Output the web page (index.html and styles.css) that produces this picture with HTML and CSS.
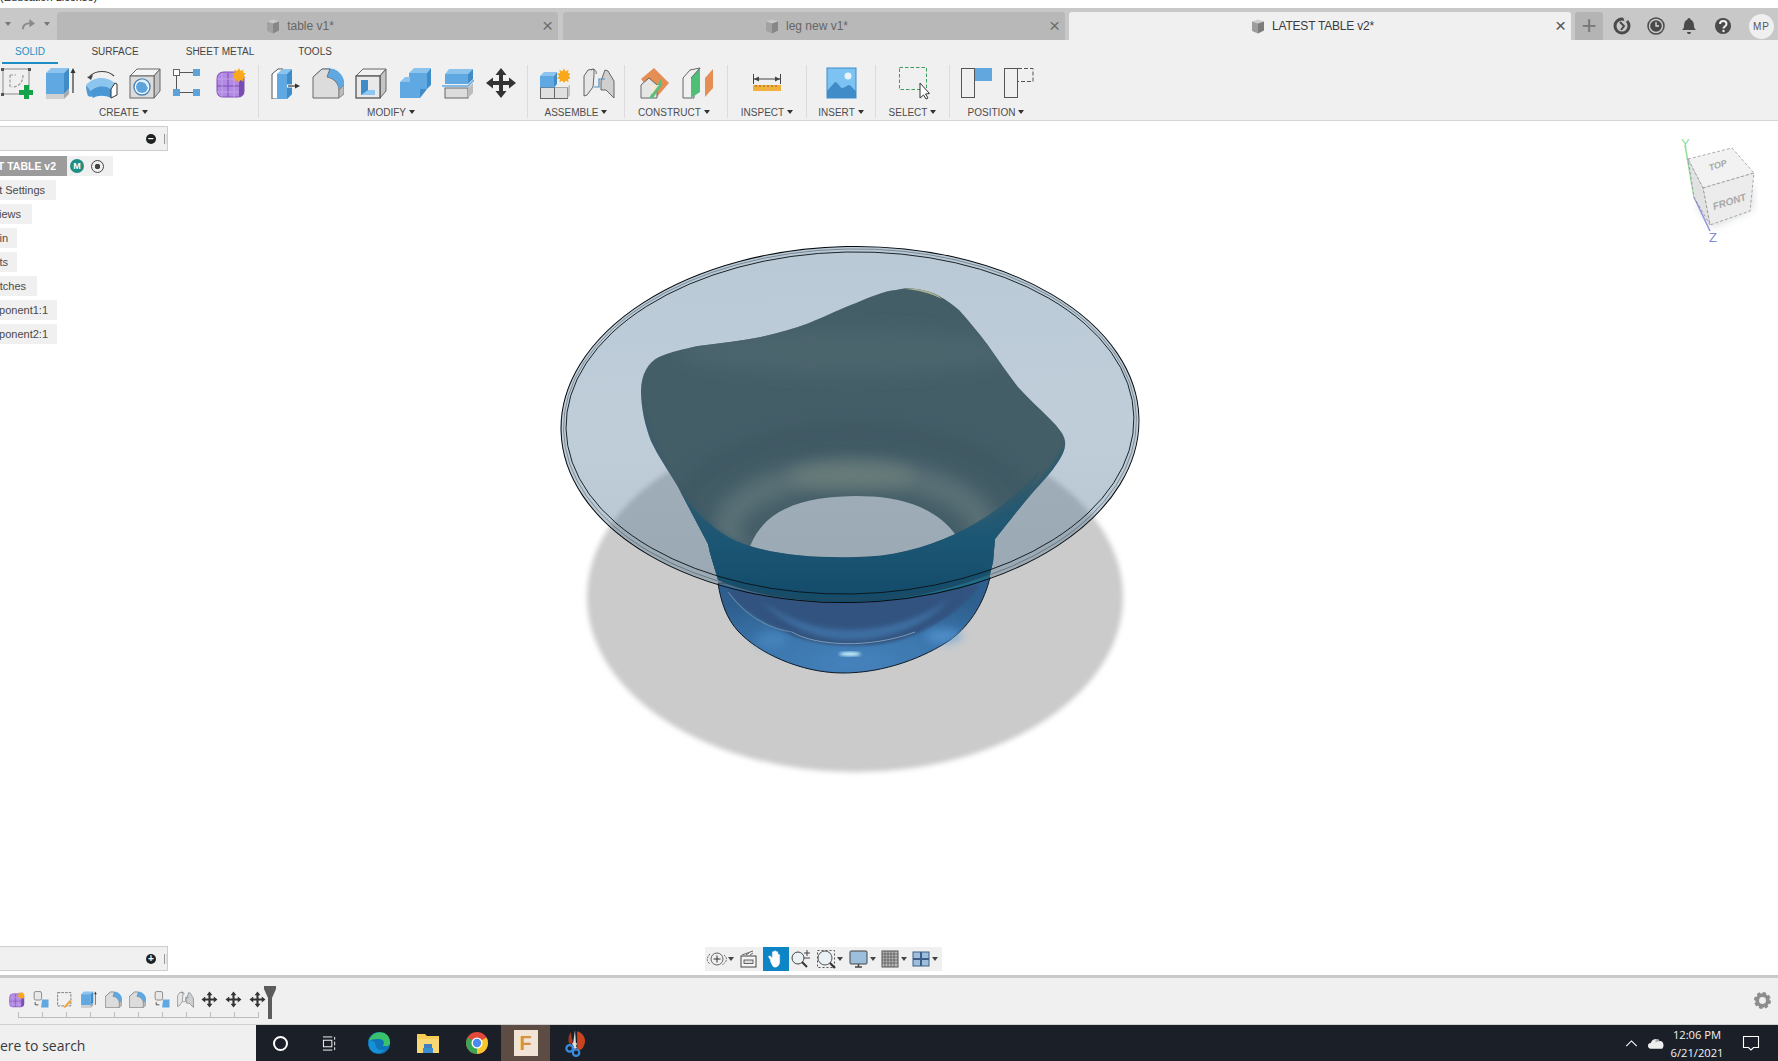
FILE: index.html
```html
<!DOCTYPE html>
<html lang="en">
<head>
<meta charset="utf-8">
<title>LATEST TABLE v2</title>
<link rel="stylesheet" href="styles.css">
</head>
<body>
<svg class="defs" aria-hidden="true">
  <defs>
    <linearGradient id="blueFace" x1="0" y1="0" x2="1" y2="1"><stop offset="0" stop-color="#6ab0e6"/><stop offset="1" stop-color="#4f9bd8"/></linearGradient>
    <radialGradient id="baseGrad" cx="0.5" cy="0.9" r="0.75"><stop offset="0" stop-color="#4582bc"/><stop offset="0.55" stop-color="#3a74aa"/><stop offset="1" stop-color="#2e5f8e"/></radialGradient>
    <linearGradient id="bandGrad" x1="0" y1="0" x2="0" y2="1"><stop offset="0" stop-color="#2e5a6e" stop-opacity=".25"/><stop offset="0.55" stop-color="#1b5674"/><stop offset="1" stop-color="#124a68"/></linearGradient>
    <linearGradient id="diskGrad" x1="0" y1="0" x2="0" y2="1"><stop offset="0" stop-color="#5f84a0" stop-opacity=".44"/><stop offset=".5" stop-color="#5f84a0" stop-opacity=".4"/><stop offset="1" stop-color="#5f8096" stop-opacity=".46"/></linearGradient>
    <filter id="blur3"><feGaussianBlur stdDeviation="2.5"/></filter>
    <filter id="blur6" x="-30%" y="-60%" width="160%" height="220%"><feGaussianBlur stdDeviation="8"/></filter>
    <filter id="blur2"><feGaussianBlur stdDeviation="1.6"/></filter>
    <filter id="blur5" x="-60%" y="-100%" width="220%" height="300%"><feGaussianBlur stdDeviation="5"/></filter>

    <symbol id="i-sketch" viewBox="0 0 32 32">
      <rect x="2" y="2" width="26" height="25" fill="none" stroke="#8a8a8a" stroke-width="1"/>
      <path d="M9 8v12h2M9 8h6M22 8c0 7-4 12-11 12" fill="none" stroke="#9a9a9a" stroke-width="1.2" stroke-dasharray="3 1.5"/>
      <rect x="0" y="1" width="3" height="3" fill="#555"/><rect x="27" y="1" width="3" height="3" fill="#555"/><rect x="0" y="26" width="3" height="3" fill="#555"/>
      <path d="M23 18h5v5h5v5h-5v4h-5v-4h-5v-5h5z" fill="#15a24c"/>
    </symbol>
    <symbol id="i-extrude" viewBox="0 0 32 32">
      <path d="M2 6l5-5h18l-5 5z" fill="#8cc4ee"/><rect x="2" y="6" width="18" height="21" fill="#5fa8e2"/>
      <path d="M20 6l5-5v21l-5 5z" fill="#3f8cc8"/>
      <rect x="2" y="27" width="18" height="5" fill="#cfcfcf"/><path d="M20 27l5-5v5l-5 5z" fill="#a8a8a8"/>
      <path d="M29 26V4" stroke="#333" stroke-width="1.2"/><path d="M26.5 6L29 1l2.5 5z" fill="#333"/>
    </symbol>
    <symbol id="i-revolve" viewBox="0 0 32 32">
      <path d="M4 9C10 3 22 3 28 9" fill="none" stroke="#444" stroke-width="1.2"/><path d="M1 10l6-2-2 5z" fill="#444"/>
      <path d="M0 18C8 9 20 9 29 16l-4 6C18 18 10 19 5 24z" fill="#8cc6ee"/>
      <path d="M0 18c0 5 1 8 2 11l3 1c2-2 3-5 3-6 6-4 13-4 17-2v-0C18 18 10 19 5 24z" fill="#4f9bd8"/>
      <path d="M5 24c5-5 13-6 20-2v9c-6-3-13-3-18 0-2-2-2-5-2-7z" fill="#4a97d6"/>
      <path d="M25 22l4-6 2 1v11l-6 3z" fill="#fff" stroke="#333" stroke-width="1"/>
    </symbol>
    <symbol id="i-hole" viewBox="0 0 32 32">
      <path d="M1 9l7-7h23l-6 7z" fill="#f4f4f4" stroke="#666"/><path d="M25 9l6-7v22l-6 7z" fill="#c4c4c4" stroke="#666"/>
      <rect x="1" y="9" width="24" height="22" fill="#dcdcdc" stroke="#666"/>
      <circle cx="13" cy="20" r="8" fill="#fff" stroke="#4a86b8" stroke-width="1.4"/>
      <circle cx="13" cy="20" r="6" fill="#5ea4dc"/><path d="M11 14a6 6 0 0 1 8 6 7 7 0 0 0-8-6z" fill="#dff0fb" stroke="#dff0fb" stroke-width="2"/>
    </symbol>
    <symbol id="i-pattern" viewBox="0 0 32 32">
      <g transform="translate(-3 0)">
        <rect x="5.500" y="2.500" width="6" height="6" fill="#fff" stroke="#666"/>
        <path d="M12 5.500h13M8.500 9v13M12 25.500h13" stroke="#555" stroke-width="1"/>
        <rect x="25" y="2" width="7" height="7" fill="#5ba3d9"/><rect x="5" y="22" width="7" height="7" fill="#5ba3d9"/><rect x="25" y="22" width="7" height="7" fill="#5ba3d9"/>
      </g>
    </symbol>
    <symbol id="i-form" viewBox="0 0 32 32">
      <path d="M3 12q0-7 7-7h14q6 0 6 7v12q0 6-6 6H9q-6 0-6-6z" fill="#b28ae4" stroke="#7f4fb8"/>
      <path d="M25 12q5 0 5 4v9q0 3-5 5z" fill="#7a4cb2"/>
      <path d="M3 19h22M14 6v24" stroke="#7a4cb2" stroke-width="1" fill="none"/>
      <path d="M3 12h22M3 25h22M8 6v24M20 6v24" stroke="#c6a8ec" stroke-width=".8" fill="none"/>
      <path d="M23 0l2 4 4-2-1 4 4 1-3 3 3 3-4 1 1 4-4-2-2 3-2-3-4 2 1-4-4-1 3-3-3-3 4-1-1-4 4 2z" fill="#f8a81a" transform="translate(7.500 .9) scale(.76)"/>
    </symbol>
    <symbol id="i-press" viewBox="0 0 32 32">
      <path d="M3 32V7l6-5h5L9 7v25z" fill="#fff" stroke="#555"/>
      <path d="M8 7l6-5h9v25l-5 5H8z" fill="#5fa8e2"/><path d="M18 7l5-5v25l-5 5z" fill="#3f8cc8"/><path d="M8 7l6-5h9l-5 5z" fill="#8cc4ee"/>
      <path d="M18 19h8" stroke="#fff" stroke-width="3"/><path d="M19 19h8" stroke="#333" stroke-width="1.2"/><path d="M26 16.500l5 2.500-5 2.500z" fill="#333"/>
    </symbol>
    <symbol id="i-fillet" viewBox="0 0 32 32">
      <path d="M1 10L10 2h9c8 1 13 8 13 16l-5 5c0-7-6-13-12-13z" fill="#5fa8e2" stroke="#5fa8e2"/>
      <path d="M1 31V10L10 2h8l-3 8c7 1 12 7 12 13v8z" fill="#dcdcdc" stroke="#666"/>
      <path d="M15 10c7 0 12 6 12 13l5-5C32 10 26 3 19 2z" fill="#5fa8e2"/>
      <path d="M27 23l5-5v9l-5 4z" fill="#bcbcbc" stroke="#888"/>
    </symbol>
    <symbol id="i-shell" viewBox="0 0 32 32">
      <path d="M1 9l7-7h23l-6 7z" fill="#f1f1f1" stroke="#666"/><path d="M25 9l6-7v22l-6 7z" fill="#c4c4c4" stroke="#666"/>
      <rect x="1" y="9" width="24" height="22" fill="#e9e9e9" stroke="#555" stroke-width="1.3"/>
      <path d="M6 13h7v10h7v5H6z" fill="#3f8cc8"/><path d="M13 23h7v5H6z" fill="#8cc8f2"/>
    </symbol>
    <symbol id="i-combine" viewBox="0 0 32 32">
      <path d="M10 6l5-5h17l-4 5z" fill="#8cc4ee"/><rect x="10" y="6" width="18" height="16" fill="#5fa8e2"/><path d="M28 6l4-5v17l-4 4z" fill="#3f8cc8"/>
      <path d="M1 15l5-5h5v5z" fill="#8cc4ee"/><rect x="1" y="15" width="20" height="16" fill="#5fa8e2"/><path d="M21 22h7l-3 4-4 5z" fill="#3f8cc8"/>
    </symbol>
    <symbol id="i-split" viewBox="0 0 32 32">
      <path d="M3 7l4-5h24l-5 5z" fill="#8cc4ee"/><rect x="3" y="7" width="23" height="10" fill="#5fa8e2"/><path d="M26 7l5-5v10l-5 5z" fill="#3f8cc8"/>
      <rect x="3" y="21" width="23" height="10" fill="#dcdcdc" stroke="#666"/><path d="M26 21l5-5v10l-5 5z" fill="#bcbcbc"/>
      <path d="M0 19h26l6-6" fill="none" stroke="#5fa8e2" stroke-width="1.5"/>
    </symbol>
    <symbol id="i-move" viewBox="0 0 32 32">
      <path d="M16 1l5.500 7H18v6h6v-3.500l7 5.500-7 5.500V18h-6v6h3.500L16 31l-5.500-7H14v-6H8v3.500L1 16l7-5.500V14h6V8h-3.500z" fill="#333"/>
    </symbol>
    <symbol id="i-comp" viewBox="0 0 32 32">
      <rect x="2.500" y="20.500" width="14" height="11" fill="#e0e0e0" stroke="#666"/><rect x="16.500" y="20.500" width="13" height="11" fill="#e0e0e0" stroke="#666"/>
      <path d="M16.500 20.500l4-4h12l-3 4z" fill="#eee"/><path d="M29.500 20.500l3-4v11l-3 4z" fill="#c4c4c4"/>
      <rect x="2" y="9" width="14" height="11.500" fill="#5fa8e2"/><path d="M2 9l4-4h13l-3 4z" fill="#8cc4ee"/><path d="M16 9l3-4v12l-3 3.500z" fill="#3f8cc8"/>
      <path d="M23 0l2 4 4-2-1 4 4 1-3 3 3 3-4 1 1 4-4-2-2 3-2-3-4 2 1-4-4-1 3-3-3-3 4-1-1-4 4 2z" fill="#f8a81a" transform="translate(8 1.300) scale(.78)"/>
    </symbol>
    <symbol id="i-joint" viewBox="0 0 32 32">
      <path d="M1 9l4-6 6-1v6l-1 12-6 8-3 1z" fill="#e6e6e6" stroke="#666"/>
      <path d="M8 3c4-2 6 2 5 4" fill="none" stroke="#666"/>
      <path d="M18 14l4-11 3 1 6 10v17l-8-8-5 0z" fill="#cfcfcf" stroke="#666"/>
      <path d="M11 20h5v-8h6" fill="none" stroke="#4f8cc0" stroke-width="1.2"/>
    </symbol>
    <symbol id="i-offset" viewBox="0 0 32 32">
      <path d="M16 1l15 15-13 15L3 12z" fill="#e48e55"/>
      <path d="M3 18l8-7 8 7v13H3z" fill="#e6e6e6" stroke="#666"/>
      <path d="M11 31l12-19 1 6-9 13z" fill="#5bbf7a"/><path d="M12 18h9l-7 9z" fill="#f3e8d6" opacity=".9"/>
    </symbol>
    <symbol id="i-plane" viewBox="0 0 32 32">
      <path d="M1 11l7-8 10-2-6 10v20H1z" fill="#f0f0f0" stroke="#666"/>
      <path d="M9 11l9-10v24l-9 6z" fill="#4fbf78"/><path d="M9 11l9-10" stroke="#666"/>
      <path d="M23 11l8-9v19l-8 9z" fill="#e48e55"/>
    </symbol>
    <symbol id="i-gear" viewBox="0 0 16 16">
      <circle cx="8" cy="8" r="5" fill="none" stroke="#8d8d8d" stroke-width="3.500"/><circle cx="8" cy="8" r="6.500" fill="none" stroke="#8d8d8d" stroke-width="3" stroke-dasharray="3 2.100"/>
    </symbol>
    <symbol id="i-cube" viewBox="0 0 16 16">
      <path d="M2 3l6-2 6 2-6 2z" fill="#cfcfcf"/><path d="M2 3l6 2v10l-5-2-1-1z" fill="#9d9d9d"/><path d="M8 5l6-2v9l-6 3z" fill="#7c7c7c"/>
    </symbol>
    <symbol id="i-mini-move" viewBox="0 0 32 32">
      <rect x="4" y="1" width="14" height="16" rx="3" fill="#e8e8e8" stroke="#777" stroke-width="1.500"/>
      <path d="M6 21v5h6" fill="none" stroke="#333" stroke-width="1.500"/>
      <path d="M19 16h12v15H17z" fill="#5fa8e2"/>
    </symbol>
    <symbol id="i-mini-sketch" viewBox="0 0 32 32">
      <rect x="3" y="3" width="25" height="25" fill="none" stroke="#666" stroke-width="1.500" stroke-dasharray="5 2"/>
      <path d="M14 30l12-13 3 3-12 12z" fill="#f2a43a"/>
    </symbol>
  </defs>
</svg>

<div class="license"><span>(Education License)</span></div>

<header class="tabbar">
  <div class="qat">
    <span class="qat-caret"></span>
    <svg class="qat-redo" viewBox="0 0 16 14"><path d="M2 12c0-5 4-7 9-6" fill="none" stroke="#8a8a8a" stroke-width="2"/><path d="M9 1l6 5-6 4z" fill="#8a8a8a"/></svg>
    <span class="qat-caret"></span>
  </div>
  <div class="tab">
    <div class="tab-main"><svg class="tab-cube"><use href="#i-cube"/></svg><span>table v1*</span></div><span class="tab-x">×</span>
  </div>
  <div class="tab tab-mid">
    <div class="tab-main"><svg class="tab-cube"><use href="#i-cube"/></svg><span>leg new v1*</span></div><span class="tab-x">×</span>
  </div>
  <div class="tab tab-active">
    <div class="tab-main"><svg class="tab-cube"><use href="#i-cube"/></svg><span>LATEST TABLE v2*</span></div><span class="tab-x">×</span>
  </div>
  <div class="tab-plus">+</div>
  <div class="top-icons">
    <svg class="top-i" viewBox="0 0 18 18"><circle cx="9" cy="9" r="7" fill="none" stroke="#4a4a4a" stroke-width="3"/><path d="M7 5l4 4-3 4" fill="none" stroke="#4a4a4a" stroke-width="2"/><path d="M10 0l6 2-4 4z" fill="#c6c6c6"/></svg>
    <svg class="top-i" viewBox="0 0 18 18"><circle cx="9" cy="9" r="8" fill="none" stroke="#4a4a4a" stroke-width="1.500"/><circle cx="9" cy="9" r="5.800" fill="#4a4a4a"/><path d="M9 5v4h3" fill="none" stroke="#ddd" stroke-width="1.300"/></svg>
    <svg class="top-i" viewBox="0 0 18 18"><path d="M9 1c1 0 1.500 1 1.500 1.500C13 3.500 14 6 14 9c0 2 1 3 2 4H2c1-1 2-2 2-4 0-3 1-5.500 3.500-6.500C7.500 2 8 1 9 1zM7 15h4c0 1.500-1 2-2 2s-2-.5-2-2z" fill="#4a4a4a"/></svg>
    <svg class="top-i" viewBox="0 0 18 18"><circle cx="9" cy="9" r="8" fill="#4a4a4a"/><path d="M6 7c0-4 6.500-4 6.500 0 0 2.500-3 2.500-3 4.500" fill="none" stroke="#eee" stroke-width="2"/><circle cx="9.500" cy="14" r="1.200" fill="#eee"/></svg>
    <div class="avatar">MP</div>
  </div>
</header>

<section class="ribbon">
  <nav class="ribbon-tabs">
    <span class="rt rt-solid">SOLID</span>
    <span class="rt rt-surface">SURFACE</span>
    <span class="rt rt-sheet">SHEET METAL</span>
    <span class="rt rt-tools">TOOLS</span>
  </nav>
  <div class="groups">
    <div class="group g-create">
      <div class="icons">
        <svg class="ic"><use href="#i-sketch"/></svg><svg class="ic"><use href="#i-extrude"/></svg><svg class="ic"><use href="#i-revolve"/></svg><svg class="ic"><use href="#i-hole"/></svg><svg class="ic"><use href="#i-pattern"/></svg><svg class="ic"><use href="#i-form"/></svg>
      </div>
      <div class="glabel">CREATE<i></i></div>
    </div>
    <div class="sep"></div>
    <div class="group g-modify">
      <div class="icons">
        <svg class="ic"><use href="#i-press"/></svg><svg class="ic"><use href="#i-fillet"/></svg><svg class="ic"><use href="#i-shell"/></svg><svg class="ic"><use href="#i-combine"/></svg><svg class="ic"><use href="#i-split"/></svg><svg class="ic"><use href="#i-move"/></svg>
      </div>
      <div class="glabel">MODIFY<i></i></div>
    </div>
    <div class="sep"></div>
    <div class="group g-assemble">
      <div class="icons"><svg class="ic"><use href="#i-comp"/></svg><svg class="ic"><use href="#i-joint"/></svg></div>
      <div class="glabel">ASSEMBLE<i></i></div>
    </div>
    <div class="sep"></div>
    <div class="group g-construct">
      <div class="icons"><svg class="ic"><use href="#i-offset"/></svg><svg class="ic"><use href="#i-plane"/></svg></div>
      <div class="glabel">CONSTRUCT<i></i></div>
    </div>
    <div class="sep"></div>
    <div class="group g-inspect">
      <div class="icons">
        <svg class="ic" viewBox="0 0 32 32"><path d="M3 12h26" stroke="#444" stroke-width="1"/><path d="M2.500 7v10M29.500 7v10" stroke="#444" stroke-width="1"/><path d="M3 12l5-2.500v5zM29 12l-5-2.500v5z" fill="#444"/><rect x="2" y="18" width="28" height="6" fill="#f2b13c"/><path d="M5 18v2M9 18v2M13 18v2M17 18v2M21 18v2M25 18v2" stroke="#8a6420" stroke-width="1"/></svg>
      </div>
      <div class="glabel">INSPECT<i></i></div>
    </div>
    <div class="sep"></div>
    <div class="group g-insert">
      <div class="icons">
        <svg class="ic" viewBox="0 0 32 32"><rect x="2" y="1" width="29" height="30" fill="#7cc2f2"/><rect x="2" y="1" width="29" height="30" fill="none" stroke="#3f8cc8" stroke-width="1"/><circle cx="23" cy="9" r="3.500" fill="#e8f3fb"/><path d="M2 24l8-9c3 0 5 6 7 6 3 0 5-3 7-3s4 4 7 6v7H2z" fill="#3f8cc8"/></svg>
      </div>
      <div class="glabel">INSERT<i></i></div>
    </div>
    <div class="sep"></div>
    <div class="group g-select">
      <div class="icons">
        <svg class="ic" viewBox="0 0 32 32"><rect x="2.500" y="0.500" width="27" height="22" fill="none" stroke="#3f9a62" stroke-width="1" stroke-dasharray="3.500 2"/><path d="M23 16v15l3.500-3 2.500 4 2-1-2.500-4 4-.5z" fill="#fff" stroke="#333" stroke-width="1"/></svg>
      </div>
      <div class="glabel">SELECT<i></i></div>
    </div>
    <div class="sep"></div>
    <div class="group g-position">
      <div class="icons">
        <svg class="ic" viewBox="0 0 32 32"><rect x="1.500" y="1.500" width="13" height="29" fill="none" stroke="#555"/><rect x="15" y="1" width="17" height="13" fill="#62a8df"/></svg>
        <svg class="ic" viewBox="0 0 32 32"><rect x="0.500" y="1.500" width="13" height="29" fill="none" stroke="#555"/><path d="M14 1.500h15v13H14" fill="none" stroke="#555" stroke-dasharray="4 2"/></svg>
      </div>
      <div class="glabel">POSITION<i></i></div>
    </div>
  </div>
</section>

<main class="canvas">
  <svg class="scene" viewBox="540 230 640 560">
    <ellipse cx="855" cy="597" rx="268" ry="175" fill="#cbcbcb" filter="url(#blur3)"/>

    <path d="M718 583C721 603 727 619 738 631C757 652 800 673 843 673C885 673 925 657 950 640C971 625 985 600 990 577Z" fill="url(#baseGrad)" stroke="#0e1a26" stroke-width="1"/>
    <path d="M726 590C745 612 775 634 815 642C838 647 872 647 895 641C930 632 962 610 980 585Z" fill="#30527f" filter="url(#blur2)"/>
    <path d="M760 600C790 622 820 630 850 630C885 630 925 618 950 598C925 628 885 640 850 640C815 640 785 625 760 600Z" fill="#3e6ea2" filter="url(#blur3)"/>
    <path d="M792 632C815 646 870 649 915 632" fill="none" stroke="#9db6cc" stroke-width="1" opacity=".7"/>
    <path d="M728 592C745 615 765 628 792 632" fill="none" stroke="#7e9cb8" stroke-width="1.200" opacity=".6"/>
    <ellipse cx="850" cy="654" rx="11" ry="2.200" fill="#c5ecfb" filter="url(#blur2)"/>
    <ellipse cx="772" cy="640" rx="16" ry="8" fill="#4f8fc8" opacity=".55" filter="url(#blur5)"/>
    <ellipse cx="944" cy="636" rx="18" ry="7" fill="#5c9ddc" opacity=".65" filter="url(#blur5)"/>

    <ellipse class="disk" cx="849.500" cy="424.500" rx="289" ry="178" transform="rotate(-1.200 849.500 424.500)" fill="url(#diskGrad)"/>

    <clipPath id="wallClip"><path d="M641 391C641 375 648 362 659 357C672 351 685 349 698 346C720 343 740 341 761 337C778 333 794 329 809 323C826 316 842 308 856 303C870 297 884 291 896 290C904 288 910 288 916 289C925 290 932 292 939 296C947 300 953 305 959 310C968 320 978 332 987 344C997 358 1007 373 1018 387C1028 398 1040 409 1050 419C1058 427 1064 434 1065 441C1066 449 1062 456 1058 462C1051 473 1042 482 1034 491C1026 500 1018 510 1011 519C1005 526 1000 533 995 539L993 562L989 578C960 592 900 602 843 602C795 602 750 594 718 580L710 553L708 544C698 525 688 506 678 487C668 470 658 456 651 441C645 425 641 408 641 391ZM750 546C758 527 770 516 785 509C805 499 832 496 856 496C880 496 902 499 920 507C936 514 948 524 955 534C925 548 890 557 856 557C815 558 780 555 750 546Z" clip-rule="evenodd"/></clipPath>
    <g clip-path="url(#wallClip)">
      <rect x="620" y="280" width="460" height="330" fill="#445e68"/>
      <ellipse cx="850" cy="352" rx="170" ry="22" fill="#4b656d" filter="url(#blur6)"/>
      <ellipse cx="855" cy="515" rx="172" ry="82" fill="none" stroke="#3d5661" stroke-width="18" opacity=".7" filter="url(#blur6)"/>
      <ellipse cx="855" cy="530" rx="128" ry="56" fill="none" stroke="#62767a" stroke-width="26" opacity=".75" filter="url(#blur6)"/>
      <ellipse cx="852" cy="476" rx="64" ry="14" fill="#75867f" opacity=".55" filter="url(#blur6)"/>
      <path d="M640 400C660 480 700 530 750 546L708 590L640 500Z" fill="#2a5a72" opacity=".55" filter="url(#blur3)"/>
      <path d="M1068 440C1040 490 1000 520 955 534L1000 590L1080 500Z" fill="#1d5a74" opacity=".55" filter="url(#blur2)"/>
      <path d="M660 455C685 510 720 538 750 546C780 555 815 558 856 557C890 557 925 548 955 534C985 520 1012 500 1040 470L1010 530L995 545L993 610H710L700 530Z" fill="url(#bandGrad)"/>
      <path d="M905 289C920 286 932 291 942 299C930 293 918 290 905 289Z" fill="#a9b090"/>
      <path d="M710 585C780 612 900 612 995 572V584C900 616 780 616 710 590Z" fill="#1e6c88"/>
    </g>

    <g fill="none" transform="rotate(-1.200 849.500 424.500)">
      <ellipse cx="850" cy="424.500" rx="289" ry="178" stroke="#060c10" stroke-width="1"/>
      <ellipse cx="850" cy="424" rx="286.500" ry="175" stroke="#3a464d" stroke-width=".5"/>
      <ellipse cx="850" cy="423" rx="284" ry="171" stroke="#0a1217" stroke-width=".9"/>
    </g>
  </svg>

  <aside class="browser">
    <div class="panel-head"><span class="minus">−</span><span class="grip"></span></div>
    <div class="tree">
      <div class="row row-root"><span class="root-name">T TABLE v2</span><span class="badge-m">M</span><span class="radio"></span></div>
      <div class="row r56"><span>t Settings</span></div>
      <div class="row r32"><span>iews</span></div>
      <div class="row r17"><span>in</span></div>
      <div class="row r17"><span>ts</span></div>
      <div class="row r37"><span>tches</span></div>
      <div class="row r57"><span>ponent1:1</span></div>
      <div class="row r57"><span>ponent2:1</span></div>
    </div>
  </aside>

  <aside class="comments"><span class="minus plus">+</span><span class="grip"></span></aside>

  <div class="navbar">
    <svg class="nav-i" viewBox="0 0 22 22"><circle cx="11" cy="11" r="6" fill="none" stroke="#555" stroke-width=".9"/><path d="M11 7.500v7M7.500 11h7" stroke="#333"/><path d="M4 6c-4 4-3 8 0 10M18 7c4 3 3 7-2 10" fill="none" stroke="#666" stroke-dasharray="2 1"/></svg><i class="nav-c"></i>
    <svg class="nav-i" viewBox="0 0 22 22"><rect x="4" y="8" width="15" height="11" fill="#f5f5f5" stroke="#444"/><rect x="7" y="12" width="9" height="3.500" fill="#ddd" stroke="#444" stroke-width=".8"/><path d="M5 7l11-4M9 7l3-2M13 7l3-2" stroke="#666"/></svg>
    <div class="hand"><svg viewBox="0 0 22 22"><path d="M5 12L3 9c-1-1 1-2 2-1l2 2V4c0-1.500 2-1.500 2 0v4-5c0-1.500 2-1.500 2 0v5-4c0-1.500 2-1.500 2 0v5-2c0-1.500 2-1.500 2 0v7c0 3-2 6-5 6H10c-3 0-3-3-5-6z" fill="#fff" stroke="#fff" stroke-width=".5"/></svg></div>
    <svg class="nav-i nav-z" viewBox="0 0 22 22"><circle cx="9" cy="10" r="6" fill="#e9f1f4" stroke="#444"/><path d="M13 14l5 5" stroke="#333" stroke-width="2"/><path d="M15 5h6M18 2v6M15 10h6" stroke="#444"/></svg>
    <svg class="nav-i nav-fit" viewBox="0 0 22 22"><rect x="2.500" y="2.500" width="17" height="17" fill="none" stroke="#555" stroke-dasharray="2 2"/><circle cx="10" cy="10" r="7" fill="#e9f1f4" stroke="#555"/><path d="M15 15l5 5" stroke="#333" stroke-width="2.200"/></svg><i class="nav-c"></i>
    <svg class="nav-i nav-disp" viewBox="0 0 22 22"><rect x="2" y="3" width="17" height="13" rx="1" fill="#9dbfdd" stroke="#444"/><path d="M7 19h7M10.500 16v3" stroke="#444" stroke-width="1.500"/></svg><i class="nav-c"></i>
    <svg class="nav-i nav-grid" viewBox="0 0 22 22"><rect x="3" y="3" width="16" height="16" fill="#b9b9b9" stroke="#555"/><path d="M6 3v16M9 3v16M12 3v16M15 3v16M3 6h16M3 9h16M3 12h16M3 15h16" stroke="#555" stroke-width=".8"/></svg><i class="nav-c"></i>
    <svg class="nav-i nav-grid" viewBox="0 0 22 22"><rect x="3" y="4" width="7.500" height="6.500" fill="#9dbfdd" stroke="#3d5e86"/><rect x="11.500" y="4" width="7.500" height="6.500" fill="#9dbfdd" stroke="#3d5e86"/><rect x="3" y="11.500" width="7.500" height="6.500" fill="#9dbfdd" stroke="#3d5e86"/><rect x="11.500" y="11.500" width="7.500" height="6.500" fill="#9dbfdd" stroke="#3d5e86"/></svg><i class="nav-c"></i>
  </div>

  <svg class="viewcube" viewBox="1670 135 108 110">
    <defs><filter id="cubeShadow"><feGaussianBlur stdDeviation="4"/></filter></defs>
    <path d="M1697 205l55-20v24l-40 18z" fill="#aab0b6" opacity=".5" filter="url(#cubeShadow)"/>
    <path d="M1685 145l9 52" stroke="#8fe09a" stroke-width="1.500"/>
    <path d="M1694 197l16 34" stroke="#8e93e0" stroke-width="1.500"/>
    <path d="M1688 159l44-11 22 25-51 15z" fill="#f2f2f2" stroke="#777" stroke-width=".6" stroke-dasharray="3 2"/>
    <path d="M1703 188l51-15-4 38-40 14z" fill="#ececec" stroke="#777" stroke-width=".6" stroke-dasharray="3 2"/>
    <path d="M1688 159l15 29 7 37-16-28z" fill="#e2e2e2" stroke="#777" stroke-width=".6" stroke-dasharray="3 2"/>
    <text class="cube-t" transform="translate(1710 171) rotate(-18)">TOP</text>
    <text class="cube-t cube-front" transform="translate(1714 210) rotate(-17)">FRONT</text>
    <text class="cube-axis cube-y" x="1681" y="148">Y</text>
    <text class="cube-axis cube-z" x="1709" y="242">Z</text>
  </svg>
</main>

<section class="timeline">
  <div class="tl-track">
    <div class="tl-icons">
      <svg class="tl"><use href="#i-form"/></svg><svg class="tl"><use href="#i-mini-move"/></svg><svg class="tl"><use href="#i-mini-sketch"/></svg><svg class="tl"><use href="#i-extrude"/></svg><svg class="tl"><use href="#i-fillet"/></svg><svg class="tl"><use href="#i-fillet"/></svg><svg class="tl"><use href="#i-mini-move"/></svg><svg class="tl"><use href="#i-joint"/></svg><svg class="tl"><use href="#i-move"/></svg><svg class="tl"><use href="#i-move"/></svg><svg class="tl"><use href="#i-move"/></svg>
    </div>
    <div class="tl-ruler"></div>
    <svg class="tl-marker" viewBox="0 0 12 33"><path d="M0 0h12v3l-4 9v21H4V12L0 3z" fill="#5c5c5c"/></svg>
  </div>
  <svg class="gear"><use href="#i-gear"/></svg>
</section>

<footer class="taskbar">
  <div class="search"><span>ere to search</span></div>
  <div class="apps">
    <div class="app"><span class="ring"></span></div>
    <div class="app"><svg class="app-i" viewBox="0 0 16 16"><path d="M1 1h10M1 15h10" stroke="#fff"/><rect x="1.500" y="4.500" width="9" height="7" fill="none" stroke="#fff"/><path d="M13.500 1v3M13.500 6v4M13.500 12v3" stroke="#fff"/></svg></div>
    <div class="app"><svg class="app-l" viewBox="0 0 26 26"><circle cx="13" cy="13" r="12" fill="#0f74b8"/><path d="M2 11C4 3 12 0 18 2c5 2 7 6 7 11 0 4-5 4-8 3 2-2 2-6-2-7-5-1-10 0-13 2z" fill="#37c26b"/><path d="M9 14c0 5 5 8 11 6-4 4-9 5-13 3-5-3-6-9-4-12 2-1 5 0 6 3z" fill="#1691d8"/></svg></div>
    <div class="app"><svg class="app-l" viewBox="0 0 24 24"><path d="M1 3h8l2 2h12v17H1z" fill="#f6cc55"/><rect x="1" y="8" width="22" height="14" fill="#f8d775"/><rect x="8" y="13" width="8" height="4" fill="#3f7fc0"/><rect x="7" y="17" width="10" height="5" fill="#3a8fd0"/></svg></div>
    <div class="app"><svg class="app-l" viewBox="0 0 24 24"><circle cx="12" cy="12" r="11" fill="#e2493a"/><path d="M12 12L2.500 6.500A11 11 0 0 0 12 23z" fill="#3aa655"/><path d="M12 12l9.500-5.500A11 11 0 0 1 12 23z" fill="#f7c52d"/><circle cx="12" cy="12" r="5.500" fill="#fff"/><circle cx="12" cy="12" r="4.200" fill="#4a8bf0"/></svg></div>
    <div class="app app-active"><div class="f-tile">F</div></div>
    <div class="app"><svg class="app-l app-snip" viewBox="0 0 24 26"><path d="M14 2c7 2 9 9 6 14-1 3-4 4-6 4z" fill="#c9441f"/><path d="M8 3c-2 3-3 8-1 11l3-1z" fill="#a5391c"/><path d="M12 1l1 14h-3z" fill="#ddd"/><path d="M13 13l-2 5M10 13l3 5" stroke="#ddd" stroke-width="2"/><circle cx="7" cy="18" r="3" fill="none" stroke="#3a8be0" stroke-width="2"/><circle cx="13" cy="22" r="3" fill="none" stroke="#3a8be0" stroke-width="2"/></svg></div>
  </div>
  <div class="tray">
    <svg class="chev" viewBox="0 0 14 8"><path d="M1 7l6-6 6 6" fill="none" stroke="#fff" stroke-width="1.200"/></svg>
    <svg class="cloud" viewBox="0 0 18 11"><path d="M3 11a3 3 0 0 1 0-6c1-4 7-6 9-2 4-1 6 5 3 8z" fill="#eee"/><path d="M8 1c2-1 4 0 4 2-2 0-4 1-4 2z" fill="#a8a8a8"/></svg>
    <div class="clock"><div>12:06 PM</div><div>6/21/2021</div></div>
    <svg class="notif" viewBox="0 0 18 18"><path d="M1.500 2.500h15v11h-5l-2.500 2.500-2.500-2.500h-5z" fill="none" stroke="#fff" stroke-width="1.100"/></svg>
  </div>
</footer>
</body>
</html>
```
FILE: styles.css
```css
* { box-sizing: border-box; }
html, body { margin: 0; padding: 0; }
body {
  width: 1778px;
  height: 1061px;
  overflow: hidden;
  display: flex;
  flex-direction: column;
  background: #fff;
  font-family: "Liberation Sans", Arial, sans-serif;
  color: #444;
}
.defs { width: 0; height: 0; position: absolute; }

.license { height: 8px; overflow: hidden; font-size: 11px; line-height: 12px; color: #222; flex: none; }
.license span { display: block; margin-top: -9px; }

/* tab bar */
.tabbar { height: 32px; flex: none; background: #c8c8c8; display: flex; align-items: flex-end; }
.qat { width: 57px; height: 32px; display: flex; align-items: center; padding: 0 0 0 5px; }
.qat-caret { width: 6px; height: 4px; border-left: 3px solid transparent; border-right: 3px solid transparent; border-top: 4px solid #777; }
.qat-redo { width: 15px; height: 13px; margin: 0 8px 0 10px; }
.tab { width: 501px; height: 28px; background: #b8b8b8; border-radius: 3px 3px 0 0; display: flex; align-items: center; margin-right: 5px; color: #666; font-size: 12px; }
.tab-mid { width: 502px; margin-right: 4px; }
.tab-active { width: 502px; background: #f0f0f0; color: #3c3c3c; margin-right: 4px; }
.tab-active .tab-main span { letter-spacing: -.2px; }
.tab-main { flex: 1; display: flex; justify-content: center; align-items: center; gap: 6px; }
.tab-cube { width: 16px; height: 17px; opacity: .8; }
.tab-active .tab-cube { opacity: 1; }
.tab-x { width: 16px; font-size: 19px; line-height: 20px; font-weight: 400; color: #6f6f6f; text-align: left; }
.tab-active .tab-x { color: #555; }
.tab-plus { width: 28px; height: 28px; background: #b4b4b4; border-radius: 3px 3px 0 0; text-align: center; font-size: 26px; line-height: 27px; color: #777; }
.top-icons { flex: 1; height: 28px; display: flex; align-items: center; padding-left: 10px; }
.top-i { width: 18px; height: 18px; margin-right: 15.500px; flex: none; }
.avatar { width: 25px; height: 25px; border-radius: 50%; background: #efefef; font-size: 10px; line-height: 25px; text-align: center; color: #555; letter-spacing: 1px; margin-left: 2px; flex: none; }

/* ribbon */
.ribbon { height: 81px; flex: none; background: #f0f0f0; border-bottom: 1px solid #d4d4d4; display: flex; flex-direction: column; }
.ribbon-tabs { height: 24px; flex: none; position: relative; display: flex; font-size: 10px; line-height: 23px; color: #444; }
.rt { text-align: center; flex: none; }
.rt-solid { width: 56px; margin-left: 2px; color: #1d8fc4; border-bottom: 2px solid #1d8fc4; height: 24px; }
.rt-surface { width: 60px; margin-left: 27px; }
.rt-sheet { width: 80px; margin-left: 35px; }
.rt-tools { width: 50px; margin-left: 30px; }
.groups { flex: 1; display: flex; align-items: flex-start; padding-top: 3px; }
.group { flex: none; display: flex; flex-direction: column; align-items: center; }
.icons { display: flex; height: 32px; }
.ic { width: 32px; height: 32px; flex: none; overflow: visible; }
.glabel { margin-top: 8px; font-size: 10px; line-height: 12px; color: #4d4d4d; white-space: nowrap; display: flex; align-items: center; }
.glabel i { width: 6px; height: 4px; margin-left: 3px; border-left: 3px solid transparent; border-right: 3px solid transparent; border-top: 4px solid #333; margin-top: -2px; }
.sep { width: 1px; height: 53px; flex: none; background: #dcdcdc; margin-top: -2px; }
.g-create { width: 258px; padding-right: 11px; }
.g-create .icons { gap: 10.600px; }
.g-modify { width: 268px; }
.g-modify .icons { gap: 11.200px; }
.g-modify .glabel, .g-construct .glabel, .g-position .glabel { position: relative; left: -2px; }
.g-assemble { width: 96px; }
.g-assemble .icons { gap: 13px; }
.g-construct { width: 102px; }
.g-construct .icons { gap: 12px; }
.g-inspect { width: 78px; }
.g-insert { width: 68px; }
.g-select { width: 73px; }
.g-position { width: 96px; }
.g-position .icons { gap: 12px; }

/* canvas */
.canvas { flex: 1; position: relative; background: #fff; overflow: hidden; }
.scene { position: absolute; left: 540px; top: 109px; width: 640px; height: 560px; }
.browser { position: absolute; left: 0; top: 5px; width: 168px; }
.panel-head, .comments { height: 25px; width: 168px; background: #f0f0f0; border: 1px solid #cdcdcd; border-left: 0; display: flex; align-items: center; justify-content: flex-end; padding-right: 1px; }
.minus { width: 10px; height: 10px; border-radius: 50%; background: #222; color: #fff; font-size: 10px; line-height: 9px; text-align: center; font-weight: 700; margin-right: 8px; }
.grip { width: 1px; height: 10px; background: #999; margin-right: 1px; box-shadow: 2px 0 0 #ddd; }
.tree { display: flex; flex-direction: column; gap: 4px; margin-top: 5px; }
.row { height: 20px; background: #f0f0f0; font-size: 11px; line-height: 20px; color: #4a4a4a; display: flex; justify-content: flex-end; white-space: nowrap; padding-right: 11px; flex: none; }
.r56 { width: 56px; }
.r32 { width: 32px; }
.r17 { width: 17px; padding-right: 9px; }
.r37 { width: 37px; }
.r57 { width: 57px; padding-right: 9px; }
.row-root { width: 113px; padding: 0; justify-content: flex-start; align-items: center; position: relative; }
.root-name { flex: none; width: 67px; height: 20px; background: #9c9c9c; color: #fff; font-weight: 700; font-size: 10.500px; padding-right: 11px; margin-right: 3px; display: flex; justify-content: flex-end; }
.badge-m { width: 14px; height: 14px; border-radius: 50%; background: #1f8f86; color: #fff; font-size: 9px; font-weight: 700; line-height: 14px; text-align: center; flex: none; }
.radio { width: 13px; height: 13px; border: 1.500px solid #444; border-radius: 50%; margin-left: 7px; flex: none; background: radial-gradient(circle, #444 0 2.500px, transparent 3px); }
.comments { position: absolute; left: 0; bottom: 4px; }
.plus { line-height: 10px; }

.navbar { position: absolute; left: 705px; bottom: 4px; height: 24px; width: 237px; background: #f0f0f0; display: flex; align-items: center; }
.nav-i { width: 22px; height: 22px; margin-left: 1px; flex: none; }
.nav-c { width: 6px; height: 4px; flex: none; border-left: 3px solid transparent; border-right: 3px solid transparent; border-top: 4px solid #444; margin-right: 2px; }
.hand { width: 26px; height: 24px; background: #0d84c6; margin-left: 4px; flex: none; display: flex; align-items: center; justify-content: center; }
.hand svg { width: 20px; height: 20px; }
.nav-z { margin-left: 0; }
.nav-fit { margin-left: 4px; }
.nav-disp { margin-left: 3px; }

.viewcube { position: absolute; left: 1670px; top: 14px; width: 108px; height: 110px; }
.cube-t { font-size: 9px; font-style: italic; font-weight: 700; fill: #a8a8a8; }
.cube-front { font-size: 10px; }
.cube-axis { font-size: 13px; }
.cube-y { fill: #8fe09a; }
.cube-z { fill: #8488d8; }

/* timeline */
.timeline { height: 50px; flex: none; background: #f0f0f0; border-top: 3px solid #c9c9c9; border-bottom: 1px solid #d0d0d0; display: flex; align-items: flex-start; justify-content: space-between; }
.tl-track { position: relative; padding: 13px 0 0 8px; }
.tl-icons { display: flex; gap: 7.140px; }
.tl { width: 17px; height: 17px; flex: none; }
.tl-ruler { width: 241px; height: 6px; margin: 4px 0 0 10px; border-bottom: 1px solid #bcbcbc; background: repeating-linear-gradient(90deg, #bcbcbc 0 1px, transparent 1px 24px); }
.tl-marker { position: absolute; left: 264px; top: 8px; width: 12px; height: 33px; }
.gear { width: 17px; height: 17px; margin: 14px 7px 0 0; }

/* taskbar */
.taskbar { height: 36px; flex: none; display: flex; background: #1b2028; color: #fff; }
.search { width: 256px; flex: none; background: #f0f0f0; color: #3a3a3a; font-family: "Open Sans", sans-serif; font-size: 14px; line-height: 41px; white-space: nowrap; }
.apps { display: flex; }
.app { width: 49px; display: flex; align-items: center; justify-content: center; }
.app-active { background: #5d4c44; }
.app-i { width: 15px; height: 15px; }
.app-l { width: 24px; height: 24px; }
.app-snip { width: 26px; height: 28px; }
.ring { width: 15px; height: 15px; border: 2.500px solid #fff; border-radius: 50%; }
.f-tile { width: 24px; height: 26px; background: #f1e4d6; color: #d8913c; font-weight: 700; font-size: 20px; line-height: 26px; text-align: center; }
.tray { margin-left: auto; display: flex; align-items: center; }
.chev { width: 13px; height: 7px; margin-right: 10px; }
.cloud { width: 17px; height: 11px; margin-right: 4px; }
.clock { width: 56px; white-space: nowrap; text-align: center; font-family: "Open Sans", sans-serif; font-size: 11.200px; line-height: 17.500px; color: #f2f2f2; margin-right: 17px; padding-top: 1px; }
.notif { width: 18px; height: 18px; margin-right: 18px; }
```
